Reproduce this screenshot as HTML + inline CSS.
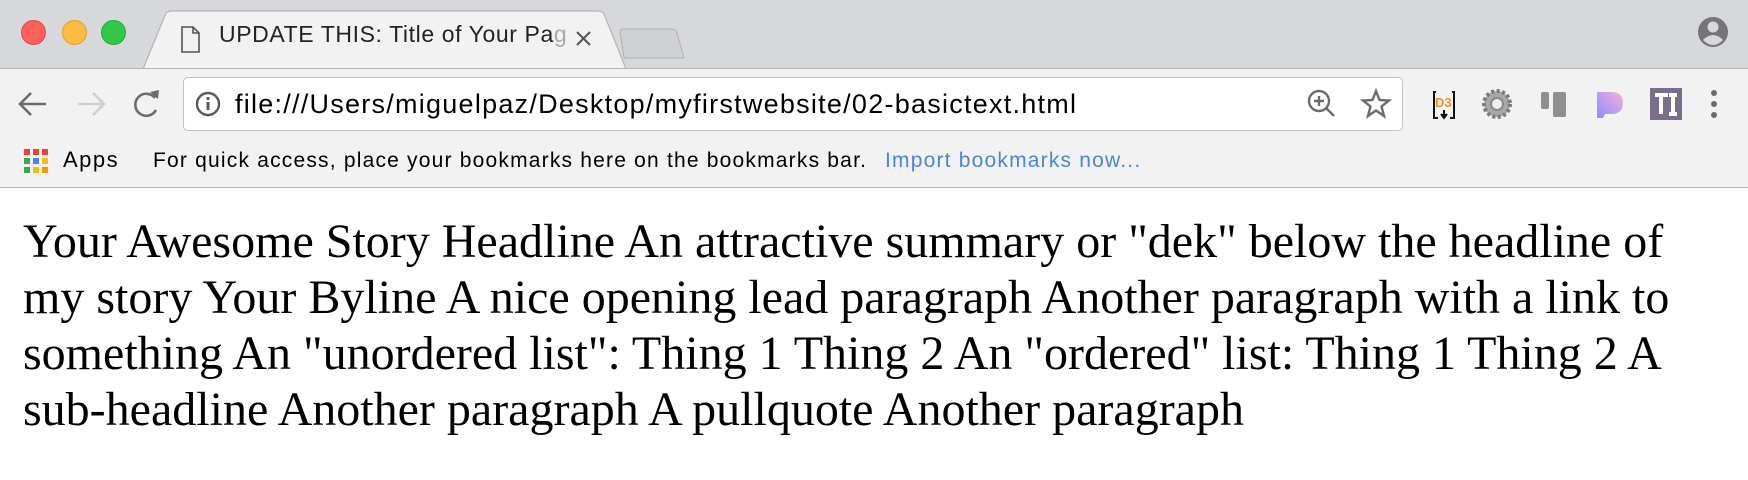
<!DOCTYPE html>
<html><head><meta charset="utf-8"><style>
*{margin:0;padding:0;box-sizing:border-box}
body{width:1748px;height:480px;overflow:hidden;background:#fff;position:relative;font-family:"Liberation Sans",sans-serif}
.abs{position:absolute}
#strip{left:0;top:0;width:1748px;height:69px;background:#d6d8db}
#toolbar{left:0;top:68px;width:1748px;height:120px;background:#f2f2f2;border-top:1px solid #b4b4b4;border-bottom:1px solid #b9b9b9}
.dot{width:25px;height:25px;border-radius:50%;top:20px}
#url{left:183px;top:77px;width:1220px;height:54px;background:#fff;border:1px solid #c2c2c2;border-radius:5px}
#page{left:23px;top:214px;font-family:"Liberation Serif",serif;font-size:48px;line-height:56px;color:#000;white-space:nowrap}
</style></head><body>
<div id="strip" class="abs"></div>
<div class="abs dot" style="left:21px;background:#fc605b;border:1px solid #de4a43"></div>
<div class="abs dot" style="left:62px;background:#fdbc40;border:1px solid #dea033"></div>
<div class="abs dot" style="left:101px;background:#34c84a;border:1px solid #27a83a"></div>
<svg class="abs" style="left:0;top:0" width="1748" height="70">
<path d="M143 69 L166 13 Q168 11 172 11 L598 11 Q602 11 604 14 L626 69 Z" fill="#f2f2f2" stroke="#b4b4b4" stroke-width="1.2"/>
<path d="M624 58 L620 32 Q620 29 624 29 L672 29 Q676 29 677 33 L684 58 Z" fill="#d0d1d3" stroke="#b0b0b0"/>
<path d="M182 27 L193 27 L199 33 L199 52 L182 52 Z M193 27 L193 33 L199 33" fill="none" stroke="#555" stroke-width="1.6"/>
<path d="M577 32 L590 45 M590 32 L577 45" stroke="#555" stroke-width="2"/>
<circle cx="1713" cy="32" r="15" fill="#757575"/>
<circle cx="1713" cy="27" r="5.5" fill="#d6d8db"/>
<path d="M1703 40 Q1713 30 1723 40 Q1718 45 1713 45 Q1708 45 1703 40Z" fill="#d6d8db"/>
</svg>
<div class="abs" style="left:219px;top:21px;font-size:23px;letter-spacing:0.6px;color:#222;white-space:nowrap;width:352px;overflow:hidden">UPDATE THIS: Title of Your Pa<span style="color:#aaa">g</span></div>
<div id="toolbar" class="abs"></div>
<div id="url" class="abs"></div>
<svg class="abs" style="left:0;top:70px" width="1748" height="120">
<path d="M20 34 L46 34 M31 23 L20 34 L31 45" fill="none" stroke="#6b6b6b" stroke-width="2.6"/>
<path d="M78 34 L104 34 M93 23 L104 34 L93 45" fill="none" stroke="#cfcfcf" stroke-width="2.6"/>
<path d="M155 28 A11 11 0 1 0 156 40" fill="none" stroke="#6b6b6b" stroke-width="2.6"/>
<path d="M150 22 L158 29 L159 20 Z" fill="#6b6b6b"/>
<circle cx="208" cy="34" r="11" fill="none" stroke="#5a5a5a" stroke-width="2.4"/>
<rect x="206.5" y="32" width="3" height="8" fill="#5a5a5a"/><rect x="206.5" y="27" width="3" height="3" fill="#5a5a5a"/>
<circle cx="1319" cy="31" r="10" fill="none" stroke="#6b6b6b" stroke-width="2.4"/>
<path d="M1326 38 L1334 46 M1314 31 L1324 31 M1319 26 L1319 36" stroke="#6b6b6b" stroke-width="2.4"/>
<path d="M1376 21 L1379.5 30 L1389 30.5 L1381.5 36.5 L1384 46 L1376 40.5 L1368 46 L1370.5 36.5 L1363 30.5 L1372.5 30 Z" fill="none" stroke="#6b6b6b" stroke-width="2.4"/>
<path d="M1436 22 L1434 22 L1434 48 L1438 48 M1452 22 L1454 22 L1454 48 L1450 48" fill="none" stroke="#111" stroke-width="2"/>
<text x="1435" y="37" font-family="Liberation Sans" font-size="13" fill="#f7941e" font-weight="bold">D3</text>
<path d="M1444 40 L1444 47 M1441 44 L1444 48 L1447 44" stroke="#111" stroke-width="2"/>
<circle cx="1497" cy="34" r="13" fill="#a8a8a8" stroke="#7a7a7a" stroke-dasharray="3 2.5" stroke-width="4"/>
<circle cx="1497" cy="34" r="6" fill="#eee" stroke="#888" stroke-width="2"/>
<rect x="1541" y="22" width="8" height="17" rx="2" fill="#8f8f8f"/><rect x="1553" y="22" width="13" height="25" rx="2" fill="#8f8f8f"/>
<defs><linearGradient id="pg" x1="0" y1="1" x2="1" y2="0"><stop offset="0" stop-color="#8f8cff"/><stop offset="1" stop-color="#f4b0d8"/></linearGradient></defs>
<path d="M1597 22 L1611 22 Q1623 22 1623 33 Q1623 44 1611 44 L1605 44 L1603 48 L1597 48 Z" fill="url(#pg)"/>
<rect x="1650" y="18" width="32" height="32" fill="#7a6f8a"/>
<path d="M1655 25 L1668 25 M1661 25 L1661 44 M1669 25 L1677 25 M1669 44 L1677 44 M1673 25 L1673 44" stroke="#fff" stroke-width="4"/>
<circle cx="1714" cy="23" r="3" fill="#6b6b6b"/><circle cx="1714" cy="34" r="3" fill="#6b6b6b"/><circle cx="1714" cy="45" r="3" fill="#6b6b6b"/>
</svg>
<div class="abs" style="left:235px;top:89px;font-size:27px;letter-spacing:1.25px;color:#000;white-space:nowrap">file:///Users/miguelpaz/Desktop/myfirstwebsite/02-basictext.html</div>
<svg class="abs" style="left:24px;top:149px" width="28" height="28">
<rect x="0" y="0" width="6" height="6" fill="#ea4335"/><rect x="9" y="0" width="6" height="6" fill="#ea4335"/><rect x="18" y="0" width="6" height="6" fill="#ea4335"/>
<rect x="0" y="9" width="6" height="6" fill="#34a853"/><rect x="9" y="9" width="6" height="6" fill="#4285f4"/><rect x="18" y="9" width="6" height="6" fill="#fbbc05"/>
<rect x="0" y="18" width="6" height="6" fill="#34a853"/><rect x="9" y="18" width="6" height="6" fill="#fbbc05"/><rect x="18" y="18" width="6" height="6" fill="#f29900"/>
</svg>
<div class="abs" style="left:63px;top:147px;font-size:22px;letter-spacing:1.5px;color:#000">Apps</div>
<div class="abs" style="left:153px;top:149px;font-size:21px;letter-spacing:1.2px;color:#000;white-space:nowrap">For quick access, place your bookmarks here on the bookmarks bar.</div>
<div class="abs" style="left:885px;top:149px;font-size:21px;letter-spacing:1.2px;color:#4a86d8;white-space:nowrap">Import bookmarks now...</div>
<div id="page" class="abs">Your Awesome Story Headline An attractive summary or "dek" below the headline of<br>my story Your Byline A nice opening lead paragraph Another paragraph with a link to<br>something An "unordered list": Thing 1 Thing 2 An "ordered" list: Thing 1 Thing 2 A<br>sub-headline Another paragraph A pullquote Another paragraph</div>
</body></html>
